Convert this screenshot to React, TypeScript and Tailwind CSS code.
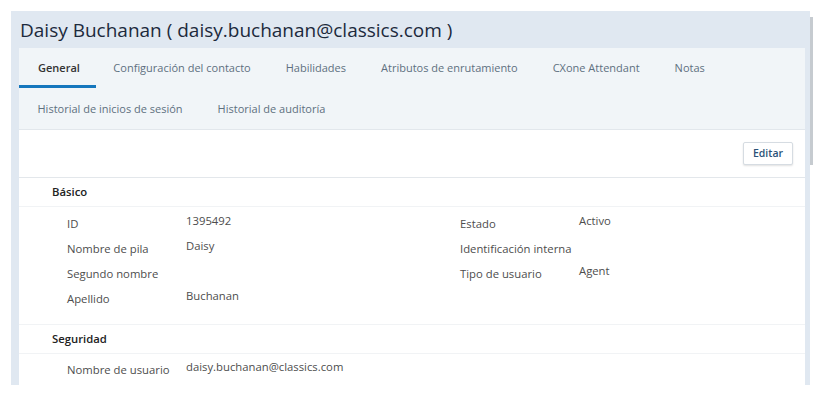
import React from 'react'

const tabsRow1 = ['General', 'Configuración del contacto', 'Habilidades', 'Atributos de enrutamiento', 'CXone Attendant', 'Notas']
const tabsRow2 = ['Historial de inicios de sesión', 'Historial de auditoría']

const leftFields = [
  { label: 'ID', value: '1395492' },
  { label: 'Nombre de pila', value: 'Daisy' },
  { label: 'Segundo nombre', value: '' },
  { label: 'Apellido', value: 'Buchanan' },
]

const rightFields = [
  { label: 'Estado', value: 'Activo' },
  { label: 'Identificación interna', value: '' },
  { label: 'Tipo de usuario', value: 'Agent' },
]

function Field({ label, value }: { label: string; value: string }) {
  return (
    <div className="flex h-[25px] items-start text-[11.3px]">
      <div className="w-[119px] shrink-0 pt-[5px] text-[#4d4d4d]">{label}</div>
      <div className="pt-[2px] text-[#4d4d4d]">{value}</div>
    </div>
  )
}

function Tab({ label, active }: { label: string; active?: boolean }) {
  return (
    <div
      className={
        active
          ? 'flex h-[40px] items-center border-b-[3px] border-[#1577bd] pl-[19px] pr-[16px] pt-[3px] font-semibold text-[#333]'
          : 'flex h-[40px] items-center border-b-[3px] border-transparent px-[17.5px] pt-[3px] text-[#5e7080]'
      }
    >
      {label}
    </div>
  )
}

export default function App() {
  return (
    <div
      className="flex h-[398px] w-[824px] bg-white pl-[11px] pt-[11px]"
      style={{ fontFamily: '"Open Sans", sans-serif' }}
    >
      <div className="flex h-[374px] w-[799px] flex-col bg-[#e0e8f1]">
        <div className="flex h-[37px] items-center px-[9px] pt-[1px] text-[19px] text-[#1c2a3c]">
          Daisy Buchanan ( daisy.buchanan@classics.com )
        </div>
        <div className="ml-[8px] mr-[5px] flex flex-1 flex-col text-[11px]">
          <div className="bg-[#f1f5f8]">
            <div className="flex">
              {tabsRow1.map((t, i) => (
                <Tab key={t} label={t} active={i === 0} />
              ))}
            </div>
            <div className="flex pl-[1px] pt-[1px]">
              {tabsRow2.map((t) => (
                <Tab key={t} label={t} />
              ))}
            </div>
          </div>
          <div className="flex flex-1 flex-col border-t border-[#e2e7ec] bg-white">
            <div className="flex h-[48px] items-center justify-end border-b border-[#e3e7eb] pr-[12px]">
              <button className="h-[23px] w-[50px] rounded-[2px] border border-[#d6dce2] bg-white text-[10.5px] font-semibold text-[#2b5277] shadow-[0_1px_2px_rgba(0,0,0,0.12)]">
                Editar
              </button>
            </div>
            <div className="flex h-[29px] items-center border-b border-[#f1f3f5] pl-[33px] text-[11.3px] font-semibold text-[#222]">
              Básico
            </div>
            <div className="flex pb-[13px] pl-[48px] pt-[4px]">
              <div className="w-[393px]">
                {leftFields.map((f) => (
                  <Field key={f.label} {...f} />
                ))}
              </div>
              <div>
                {rightFields.map((f) => (
                  <Field key={f.label} {...f} />
                ))}
              </div>
            </div>
            <div className="flex h-[30px] items-center border-y border-[#f1f3f5] pl-[33px] text-[11.3px] font-semibold text-[#222]">
              Seguridad
            </div>
            <div className="pl-[48px] pt-[3px]">
              <Field label="Nombre de usuario" value="daisy.buchanan@classics.com" />
            </div>
          </div>
        </div>
      </div>
      <div className="w-[3px] pt-[6px]">
        <div className="h-[148px] w-[3px] bg-[#c6cbd0]" />
      </div>
    </div>
  )
}
